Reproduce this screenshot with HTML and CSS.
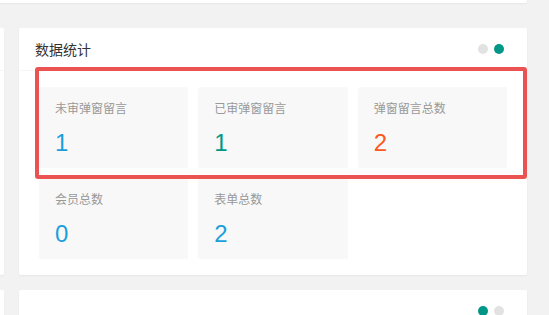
FILE: index.html
```html
<!DOCTYPE html>
<html lang="zh-CN">
<head>
    <meta charset="UTF-8">
    <meta name="viewport" content="width=device-width, initial-scale=1.0">
    <title>数据统计</title>
    <link rel="stylesheet" href="styles.css">
</head>
<body>
    <div class="layout">
        <div class="card card-top"></div>

        <div class="card card-side">
            <div class="card-header"></div>
        </div>

        <div class="card card-main">
            <div class="card-header">
                <span class="card-title">数据统计</span>
                <span class="dots">
                    <i class="dot"></i>
                    <i class="dot dot-on"></i>
                </span>
            </div>
            <div class="card-body">
                <div class="backlog">
                    <div class="backlog-item">
                        <h3>未审弹窗留言</h3>
                        <p><cite class="c-blue">1</cite></p>
                    </div>
                    <div class="backlog-item">
                        <h3>已审弹窗留言</h3>
                        <p><cite class="c-green">1</cite></p>
                    </div>
                    <div class="backlog-item">
                        <h3>弹窗留言总数</h3>
                        <p><cite class="c-orange">2</cite></p>
                    </div>
                    <div class="backlog-item">
                        <h3>会员总数</h3>
                        <p><cite class="c-blue">0</cite></p>
                    </div>
                    <div class="backlog-item">
                        <h3>表单总数</h3>
                        <p><cite class="c-blue">2</cite></p>
                    </div>
                </div>
            </div>
            <!-- 标注框 -->
            <div class="mark"></div>
        </div>

        <div class="card card-side"></div>

        <div class="card card-main">
            <div class="card-header">
                <span class="card-title"></span>
                <span class="dots">
                    <i class="dot dot-on"></i>
                    <i class="dot"></i>
                </span>
            </div>
        </div>
    </div>
</body>
</html>
```

FILE: styles.css
```css
/* 后台首页 - 数据统计卡片 */
html, body {
    height: 100%;
}
body {
    margin: 0;
    background-color: #f2f2f2;
    font-family: 'Liberation Sans', Arial, 'Noto Sans CJK SC', sans-serif;
    color: #333;
    overflow: hidden;
}
.layout {
    display: grid;
    grid-template-columns: 100px 508px;
    column-gap: 15px;
    row-gap: 15px;
    margin-left: -96px;
    margin-top: -37px;
}
.card {
    background-color: #fff;
    border-radius: 2px;
    box-shadow: 0 1px 2px 0 rgba(0, 0, 0, 0.05);
}
.card-top {
    grid-column: 1 / 3;
    height: 40px;
    margin-bottom: 10px;
}
.card-side {
    min-height: 60px;
}
.card-main {
    position: relative;
    min-height: 60px;
}
.card-header {
    height: 42px;
    border-bottom: 1px solid #f6f6f6;
    padding: 0 23px 0 16px;
    display: flex;
    align-items: center;
    justify-content: space-between;
}
.card-title {
    font-family: 'Noto Sans CJK SC', sans-serif;
    font-size: 14px;
    color: #333;
}
.dots {
    display: flex;
    gap: 6px;
}
.dot {
    width: 10px;
    height: 10px;
    border-radius: 50%;
    background-color: #e2e2e2;
}
.dot-on {
    background-color: #009688;
}
.card-body {
    padding: 16px 20px;
}
.backlog {
    display: grid;
    grid-template-columns: repeat(3, 1fr);
    gap: 10px;
}
.backlog-item {
    height: 81px;
    box-sizing: border-box;
    padding: 14px 16px 10px;
    background-color: #f8f8f8;
    border-radius: 2px;
    color: #999;
}
.backlog-item h3 {
    margin: 0;
    font-family: 'Noto Sans CJK SC', sans-serif;
    font-size: 12px;
    font-weight: normal;
    line-height: 14px;
    color: #999;
}
.backlog-item p {
    margin: 13px 0 0;
    line-height: 30px;
}
.backlog-item cite {
    font-style: normal;
    font-size: 24px;
}
.c-blue {
    color: #1a9fdb;
}
.c-green {
    color: #009688;
}
.c-orange {
    color: #ff5722;
}
.mark {
    position: absolute;
    left: 16px;
    top: 39px;
    width: 492px;
    height: 112px;
    box-sizing: border-box;
    border: 4px solid #eb5353;
    border-radius: 3px;
}
```
